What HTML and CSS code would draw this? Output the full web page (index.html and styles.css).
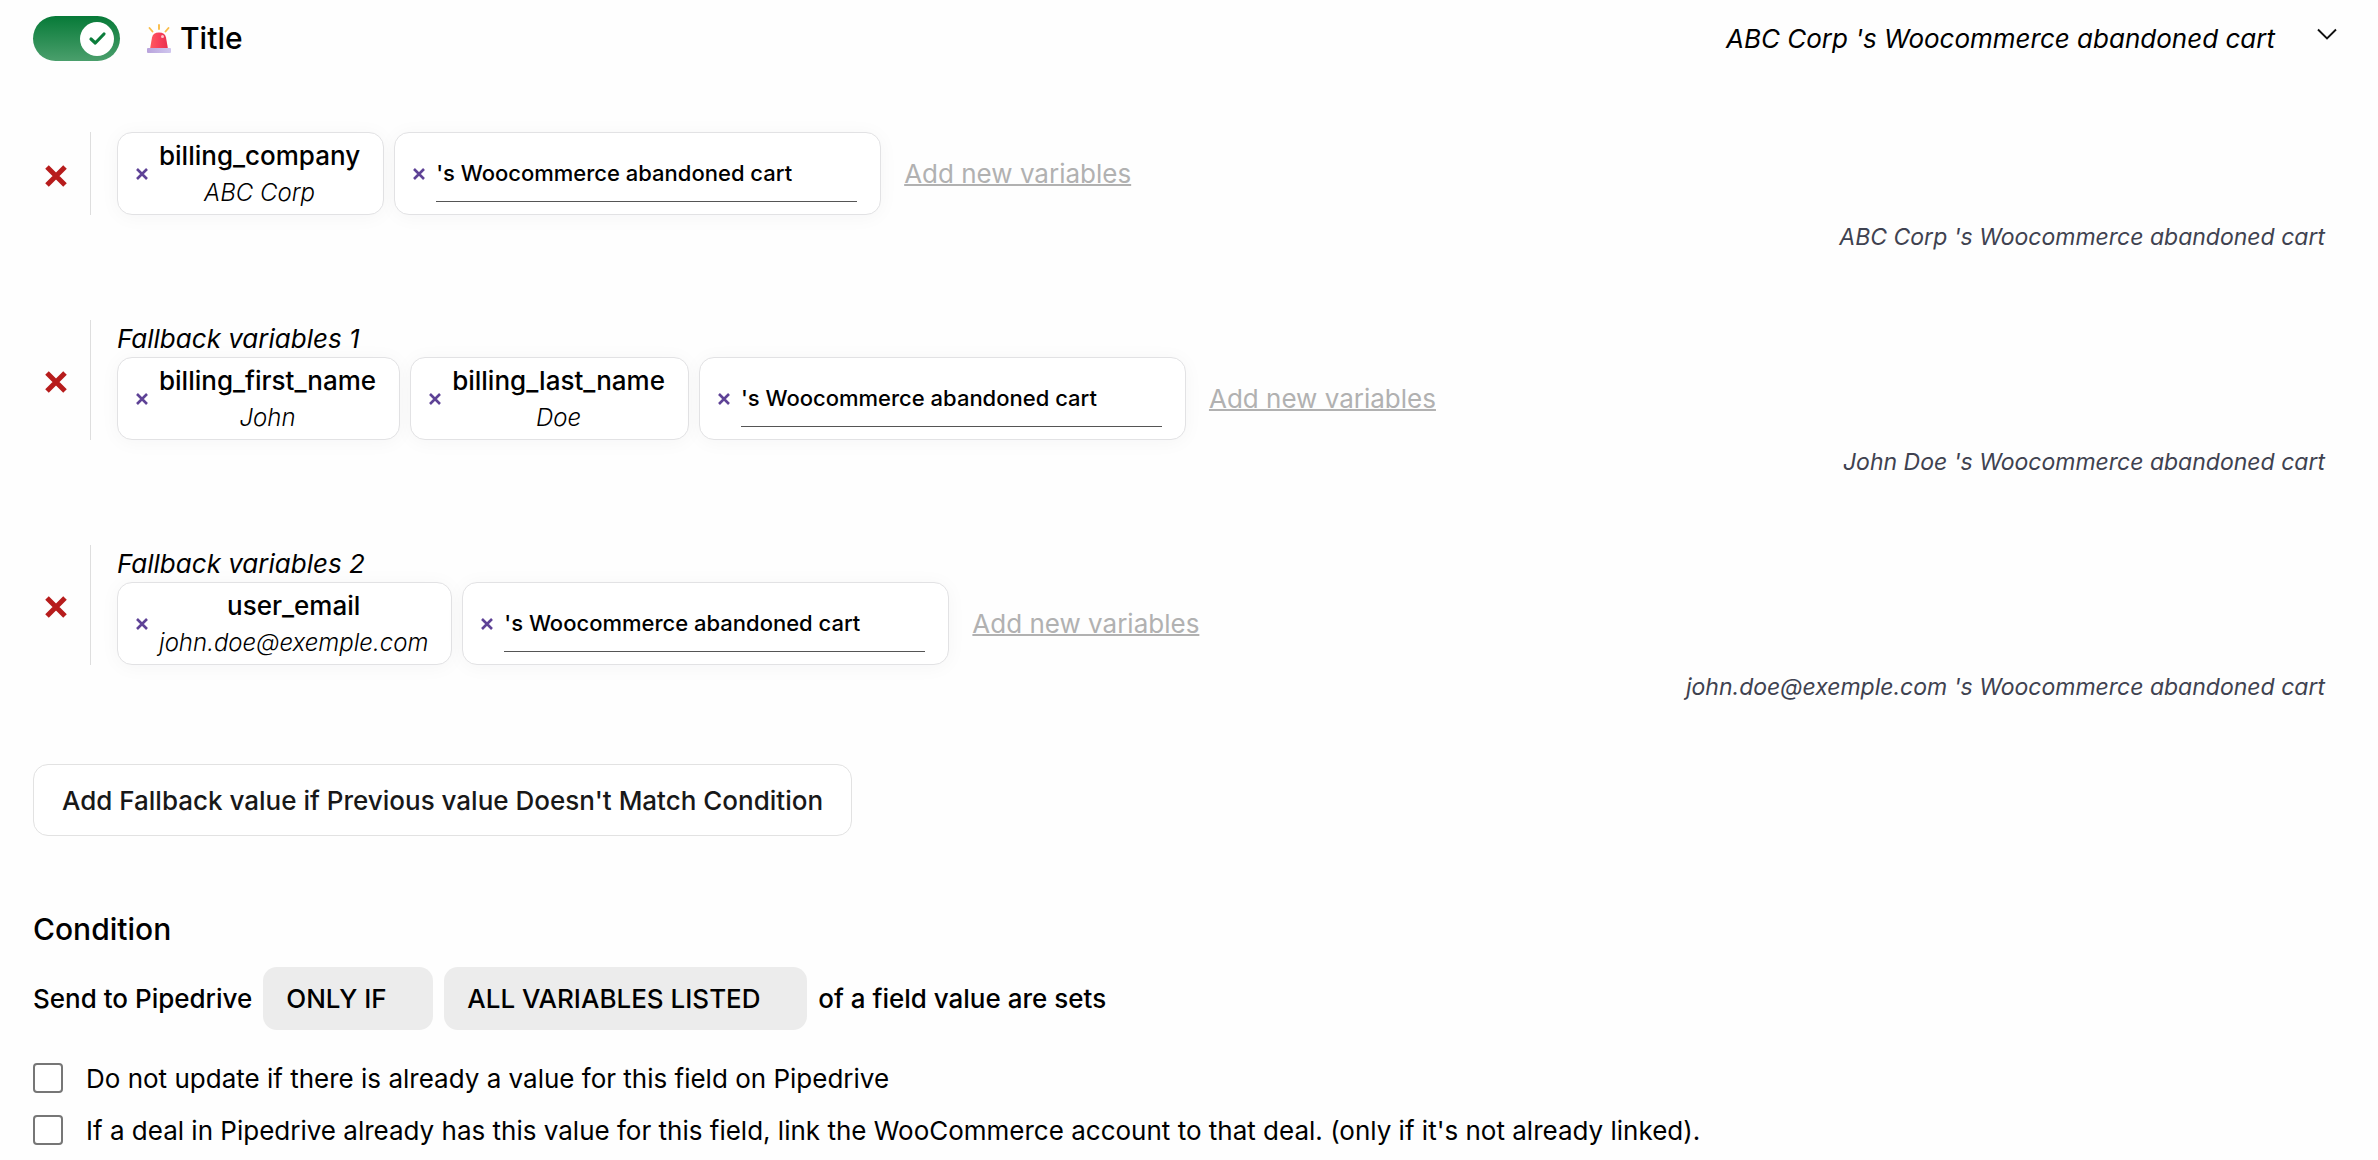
FILE: index.html
```html
<!DOCTYPE html>
<html lang="en">
<head>
<meta charset="utf-8">
<meta name="viewport" content="width=device-width, initial-scale=1">
<title>Title field</title>
<link rel="stylesheet" href="styles.css">
</head>
<body>
<svg class="sprite" aria-hidden="true">
  <symbol id="cross" viewBox="0 0 14 14"><path d="M2 2l10 10M12 2L2 12" fill="none" stroke="currentColor" stroke-width="2.6"/></symbol>
  <symbol id="cross-bold" viewBox="0 0 24 24"><path d="M3 3l18 18M21 3L3 21" fill="none" stroke="currentColor" stroke-width="5"/></symbol>
</svg>
<main class="page">
  <header class="field-head">
    <label class="switch">
      <input type="checkbox" class="switch-input" checked aria-label="Enable title">
      <span class="switch-knob">
        <svg viewBox="0 0 34 34" aria-hidden="true"><path d="M11 17l4.300 4L24 12" fill="none" stroke="#0b7d3b" stroke-width="3.200" stroke-linecap="round" stroke-linejoin="round"/></svg>
      </span>
    </label>
    <h1 class="title">
      <svg class="siren" viewBox="0 0 24 30" aria-hidden="true">
        <defs>
          <linearGradient id="dome" x1="0" x2="1"><stop offset="0" stop-color="#ff5a5f"/><stop offset=".5" stop-color="#f8405a"/><stop offset="1" stop-color="#e8304f"/></linearGradient>
          <linearGradient id="base" x1="0" x2="1"><stop offset="0" stop-color="#b9a3dc"/><stop offset="1" stop-color="#cfc6ee"/></linearGradient>
        </defs>
        <path d="M12 1v4M2.500 4l3 3.500M21.500 4l-3 3.500" stroke="#f9bd4a" stroke-width="1.900" stroke-linecap="round"/>
        <path d="M3 25L5 13.500Q6 8.500 12 8.500t7 5L21 25z" fill="url(#dome)"/>
        <circle cx="15.500" cy="12.500" r="1.500" fill="#ffc4c9"/>
        <rect x="0" y="24" width="24" height="5" rx="1" fill="url(#base)"/>
      </svg>
      Title
    </h1>
    <span class="summary">ABC Corp 's Woocommerce abandoned cart</span>
    <button class="icon-button" aria-label="Collapse">
      <svg class="chevron" viewBox="0 0 20 12" aria-hidden="true"><path d="M1 1.500l9 9 9-9" fill="none" stroke="#111" stroke-width="1.900"/></svg>
    </button>
  </header>

  <section class="rule">
    <button class="icon-button remove-rule" aria-label="Remove variables"><svg class="cross-bold"><use href="#cross-bold"/></svg></button>
    <div class="rule-body">
      <div class="chips">
        <div class="chip">
          <button class="icon-button remove-chip" aria-label="Remove billing_company"><svg class="cross"><use href="#cross"/></svg></button>
          <div class="variable"><span class="name">billing_company</span><span class="value">ABC Corp</span></div>
        </div>
        <div class="chip">
          <button class="icon-button remove-chip" aria-label="Remove text"><svg class="cross"><use href="#cross"/></svg></button>
          <input class="text-input" type="text" aria-label="Text" value="'s Woocommerce abandoned cart">
        </div>
        <a class="add-link" href="#">Add new variables</a>
      </div>
    </div>
  </section>
  <p class="result">ABC Corp 's Woocommerce abandoned cart</p>

  <section class="rule">
    <button class="icon-button remove-rule" aria-label="Remove fallback 1"><svg class="cross-bold"><use href="#cross-bold"/></svg></button>
    <div class="rule-body">
      <h2 class="rule-label">Fallback variables 1</h2>
      <div class="chips">
        <div class="chip">
          <button class="icon-button remove-chip" aria-label="Remove billing_first_name"><svg class="cross"><use href="#cross"/></svg></button>
          <div class="variable"><span class="name">billing_first_name</span><span class="value">John</span></div>
        </div>
        <div class="chip">
          <button class="icon-button remove-chip" aria-label="Remove billing_last_name"><svg class="cross"><use href="#cross"/></svg></button>
          <div class="variable"><span class="name">billing_last_name</span><span class="value">Doe</span></div>
        </div>
        <div class="chip">
          <button class="icon-button remove-chip" aria-label="Remove text"><svg class="cross"><use href="#cross"/></svg></button>
          <input class="text-input" type="text" aria-label="Text" value="'s Woocommerce abandoned cart">
        </div>
        <a class="add-link" href="#">Add new variables</a>
      </div>
    </div>
  </section>
  <p class="result">John Doe 's Woocommerce abandoned cart</p>

  <section class="rule">
    <button class="icon-button remove-rule" aria-label="Remove fallback 2"><svg class="cross-bold"><use href="#cross-bold"/></svg></button>
    <div class="rule-body">
      <h2 class="rule-label">Fallback variables 2</h2>
      <div class="chips">
        <div class="chip">
          <button class="icon-button remove-chip" aria-label="Remove user_email"><svg class="cross"><use href="#cross"/></svg></button>
          <div class="variable"><span class="name">user_email</span><span class="value">john.doe@exemple.com</span></div>
        </div>
        <div class="chip">
          <button class="icon-button remove-chip" aria-label="Remove text"><svg class="cross"><use href="#cross"/></svg></button>
          <input class="text-input" type="text" aria-label="Text" value="'s Woocommerce abandoned cart">
        </div>
        <a class="add-link" href="#">Add new variables</a>
      </div>
    </div>
  </section>
  <p class="result">john.doe@exemple.com 's Woocommerce abandoned cart</p>

  <button class="add-fallback">Add Fallback value if Previous value Doesn't Match Condition</button>

  <section class="condition">
    <h2 class="condition-title">Condition</h2>
    <div class="sentence">
      <span>Send to Pipedrive</span>
      <select class="select" aria-label="When to send"><option>ONLY IF</option></select>
      <select class="select" aria-label="Which variables"><option>ALL VARIABLES LISTED</option></select>
      <span>of a field value are sets</span>
    </div>
    <label class="option"><input class="box" type="checkbox">Do not update if there is already a value for this field on Pipedrive</label>
    <label class="option"><input class="box" type="checkbox">If a deal in Pipedrive already has this value for this field, link the WooCommerce account to that deal. (only if it's not already linked).</label>
  </section>
</main>
</body>
</html>
```
FILE: styles.css
```css
* {
  box-sizing: border-box;
}

body {
  margin: 0;
  background: #fefefe;
  color: #000;
  font: 400 26px/37px Inter, "Liberation Sans", sans-serif;
}

h1,
h2,
p {
  margin: 0;
}

button,
input,
select {
  margin: 0;
  font: inherit;
  color: inherit;
}

.sprite {
  position: absolute;
  width: 0;
  height: 0;
}

.page {
  padding: 16px 33px 0;
}

/* Header */

.field-head {
  display: flex;
  align-items: center;
  height: 45px;
  padding-right: 8px;
}

.switch {
  display: flex;
  align-items: center;
  justify-content: flex-end;
  width: 87px;
  height: 45px;
  padding: 0 6px;
  border-radius: 23px;
  background: linear-gradient(#077a38, #4a9f6c);
}

.switch-input {
  appearance: none;
  width: 0;
  height: 0;
}

.switch-knob {
  width: 34px;
  height: 34px;
  border-radius: 50%;
  background: #fff;
}

.switch-knob svg {
  display: block;
}

.title {
  display: flex;
  align-items: center;
  gap: 9px;
  margin-left: 27px;
  font-size: 30px;
  font-weight: 500;
}

.siren {
  width: 24px;
  height: 30px;
}

.summary {
  margin-left: auto;
  font-style: italic;
}

.icon-button {
  display: flex;
  flex: none;
  align-items: center;
  padding: 0;
  border: 0;
  background: none;
  cursor: pointer;
}

.chevron {
  width: 20px;
  height: 12px;
  margin: 0 0 10px 42px;
}

/* Variable rows */

.rule {
  display: flex;
  margin-top: 67px;
}

.field-head + .rule {
  margin-top: 71px;
}

.remove-rule {
  justify-content: center;
  width: 46px;
  margin-right: 11px;
  padding-top: 4px;
  color: #b71c1c;
}

.cross-bold {
  width: 24px;
  height: 24px;
}

.rule-body {
  flex: 1;
  padding-left: 26px;
  border-left: 1px solid #dedede;
}

.rule-label {
  font-size: 26px;
  font-weight: 400;
  font-style: italic;
}

.chips {
  display: flex;
  align-items: center;
  gap: 10px;
}

.chip {
  display: flex;
  align-items: center;
  gap: 10px;
  min-height: 83px;
  padding: 3px 23px 3px 17px;
  border: 1px solid #e2e2e4;
  border-radius: 15px;
  background: #fff;
  box-shadow: 0 2px 20px rgba(20, 20, 60, 0.04);
}

.remove-chip {
  color: #5e4296;
}

.cross {
  width: 14px;
  height: 14px;
}

.variable {
  display: flex;
  flex-direction: column;
  align-items: center;
}

.name {
  font-weight: 500;
}

.value {
  font-size: 24px;
  font-style: italic;
  font-weight: 300;
}

.text-input {
  width: 421px;
  height: 56px;
  padding: 0;
  border: 0;
  border-bottom: 1px solid #555;
  background: none;
  font-size: 22px;
  font-weight: 500;
  outline: none;
}

.add-link {
  margin-left: 13px;
  color: #b1b1b1;
  text-decoration-thickness: 2px;
}

.result {
  margin-top: 6px;
  padding-right: 20px;
  color: #3f4250;
  font-size: 23px;
  font-style: italic;
  line-height: 32px;
  text-align: right;
}

.add-fallback {
  margin-top: 61px;
  height: 72px;
  padding: 0 28px;
  border: 1px solid #e2e2e2;
  border-radius: 15px;
  background: #fff;
  color: #181818;
  font-weight: 500;
}

/* Condition */

.condition {
  margin-top: 73px;
}

.condition-title {
  font-size: 30px;
  font-weight: 500;
  line-height: 40px;
}

.sentence {
  display: flex;
  align-items: center;
  gap: 11px;
  margin: 18px 0 28px;
  font-weight: 500;
}

.select {
  appearance: none;
  height: 63px;
  padding: 0 46px 0 23px;
  border: 0;
  border-radius: 14px;
  background: #ececec;
}

.option {
  display: flex;
  align-items: center;
  gap: 23px;
  min-height: 40px;
  margin-bottom: 12px;
}

.box {
  appearance: none;
  flex: none;
  width: 30px;
  height: 30px;
  border: 2px solid #767676;
  border-radius: 4px;
  background: #fff;
}
```
